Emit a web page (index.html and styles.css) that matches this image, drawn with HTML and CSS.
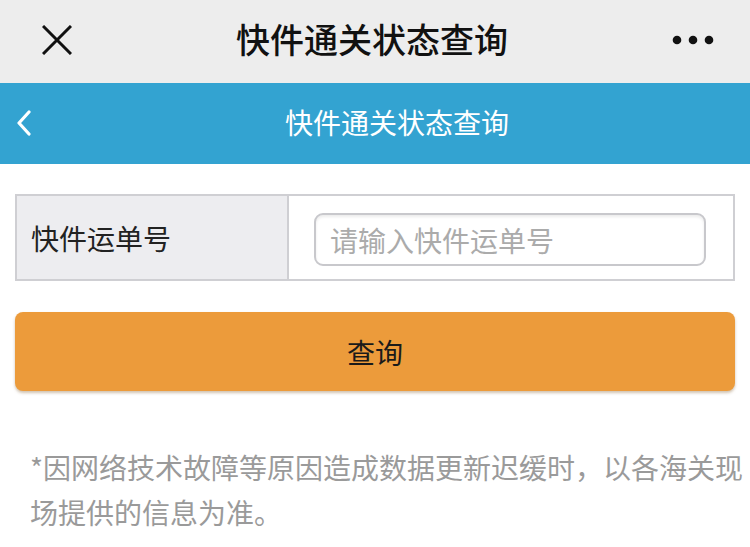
FILE: index.html
```html
<!DOCTYPE html>
<html lang="zh-CN">
<head>
<meta charset="utf-8">
<link rel="stylesheet" href="styles.css">
</head>
<body>
<div class="topbar">
  <svg class="close" width="30" height="30" viewBox="0 0 30 30"><path d="M1 1 L29 29 M29 1 L1 29" stroke="#111" stroke-width="3" fill="none"/></svg>
  <div class="toptitle">快件通关状态查询</div>
  <svg class="more" width="42" height="10" viewBox="0 0 42 10"><circle cx="5" cy="5" r="4.3" fill="#111"/><circle cx="21" cy="5" r="4.3" fill="#111"/><circle cx="37" cy="5" r="4.3" fill="#111"/></svg>
</div>
<div class="navbar">
  <svg class="back" width="16" height="26" viewBox="0 0 16 26"><path d="M13 2 L3 13 L13 24" stroke="#fff" stroke-width="3.2" fill="none" stroke-linecap="round" stroke-linejoin="round"/></svg>
  <div class="navtitle">快件通关状态查询</div>
</div>
<main class="content">
  <div class="form">
    <div class="label">快件运单号</div>
    <div class="field"><div class="input">请输入快件运单号</div></div>
  </div>
  <div class="btn">查询</div>
  <p class="note">*因网络技术故障等原因造成数据更新迟缓时，以各海关现场提供的信息为准。</p>
</main>
</body>
</html>
```
FILE: styles.css
```css
html, body { margin: 0; padding: 0; background: #fff; }
body {
  width: 750px; height: 547px; overflow: hidden;
  font-family: "Noto Sans CJK SC", "Noto Sans", sans-serif;
}
.topbar {
  height: 83px; background: #ededed;
  display: flex; align-items: center; justify-content: space-between;
  padding: 0 36px 0 42px; box-sizing: border-box;
}
.close { margin-top: -4px; }
.toptitle {
  font-size: 34px; font-weight: 500; color: #111;
  margin-left: 0; margin-top: -6px;
}
.more { margin-top: -4px; }
.navbar {
  height: 81px; background: #33a3d1;
  display: flex; align-items: center; position: relative;
}
.back { margin-left: 16px; margin-top: -2px; }
.navtitle {
  position: absolute; left: 0; right: 0; text-align: center;
  font-size: 28px; color: #fff; margin-left: 44px; margin-top: -4px;
}
.content { padding: 30px 15px 0 15px; }
.form {
  display: flex; height: 87px; border: 2px solid #cfcfd3; box-sizing: border-box;
}
.label {
  width: 272px; background: #ededf0; border-right: 2px solid #cfcfd3;
  display: flex; align-items: center; padding-left: 14px; box-sizing: border-box;
  font-size: 28px; color: #222;
}
.field { flex: 1; display: flex; align-items: center; padding: 4px 27px 0 25px; }
.input {
  flex: 1; height: 53px; border: 2px solid #c8c8cc; border-radius: 9px;
  box-sizing: border-box; display: flex; align-items: center; padding-left: 14px;
  font-size: 28px; color: #ababab;
  box-shadow: inset 0 2px 3px rgba(0,0,0,0.08);
}
.btn {
  margin-top: 31px; height: 79px; background: #ec9b3b; border-radius: 8px;
  display: flex; align-items: center; justify-content: center;
  font-size: 28px; color: #1a1a1a;
  box-shadow: 0 2px 3px rgba(120,80,30,0.35);
}
.note {
  margin: 54px -15px 0 15px; font-size: 28px; line-height: 45px; color: #9a9a9a;
}
```
